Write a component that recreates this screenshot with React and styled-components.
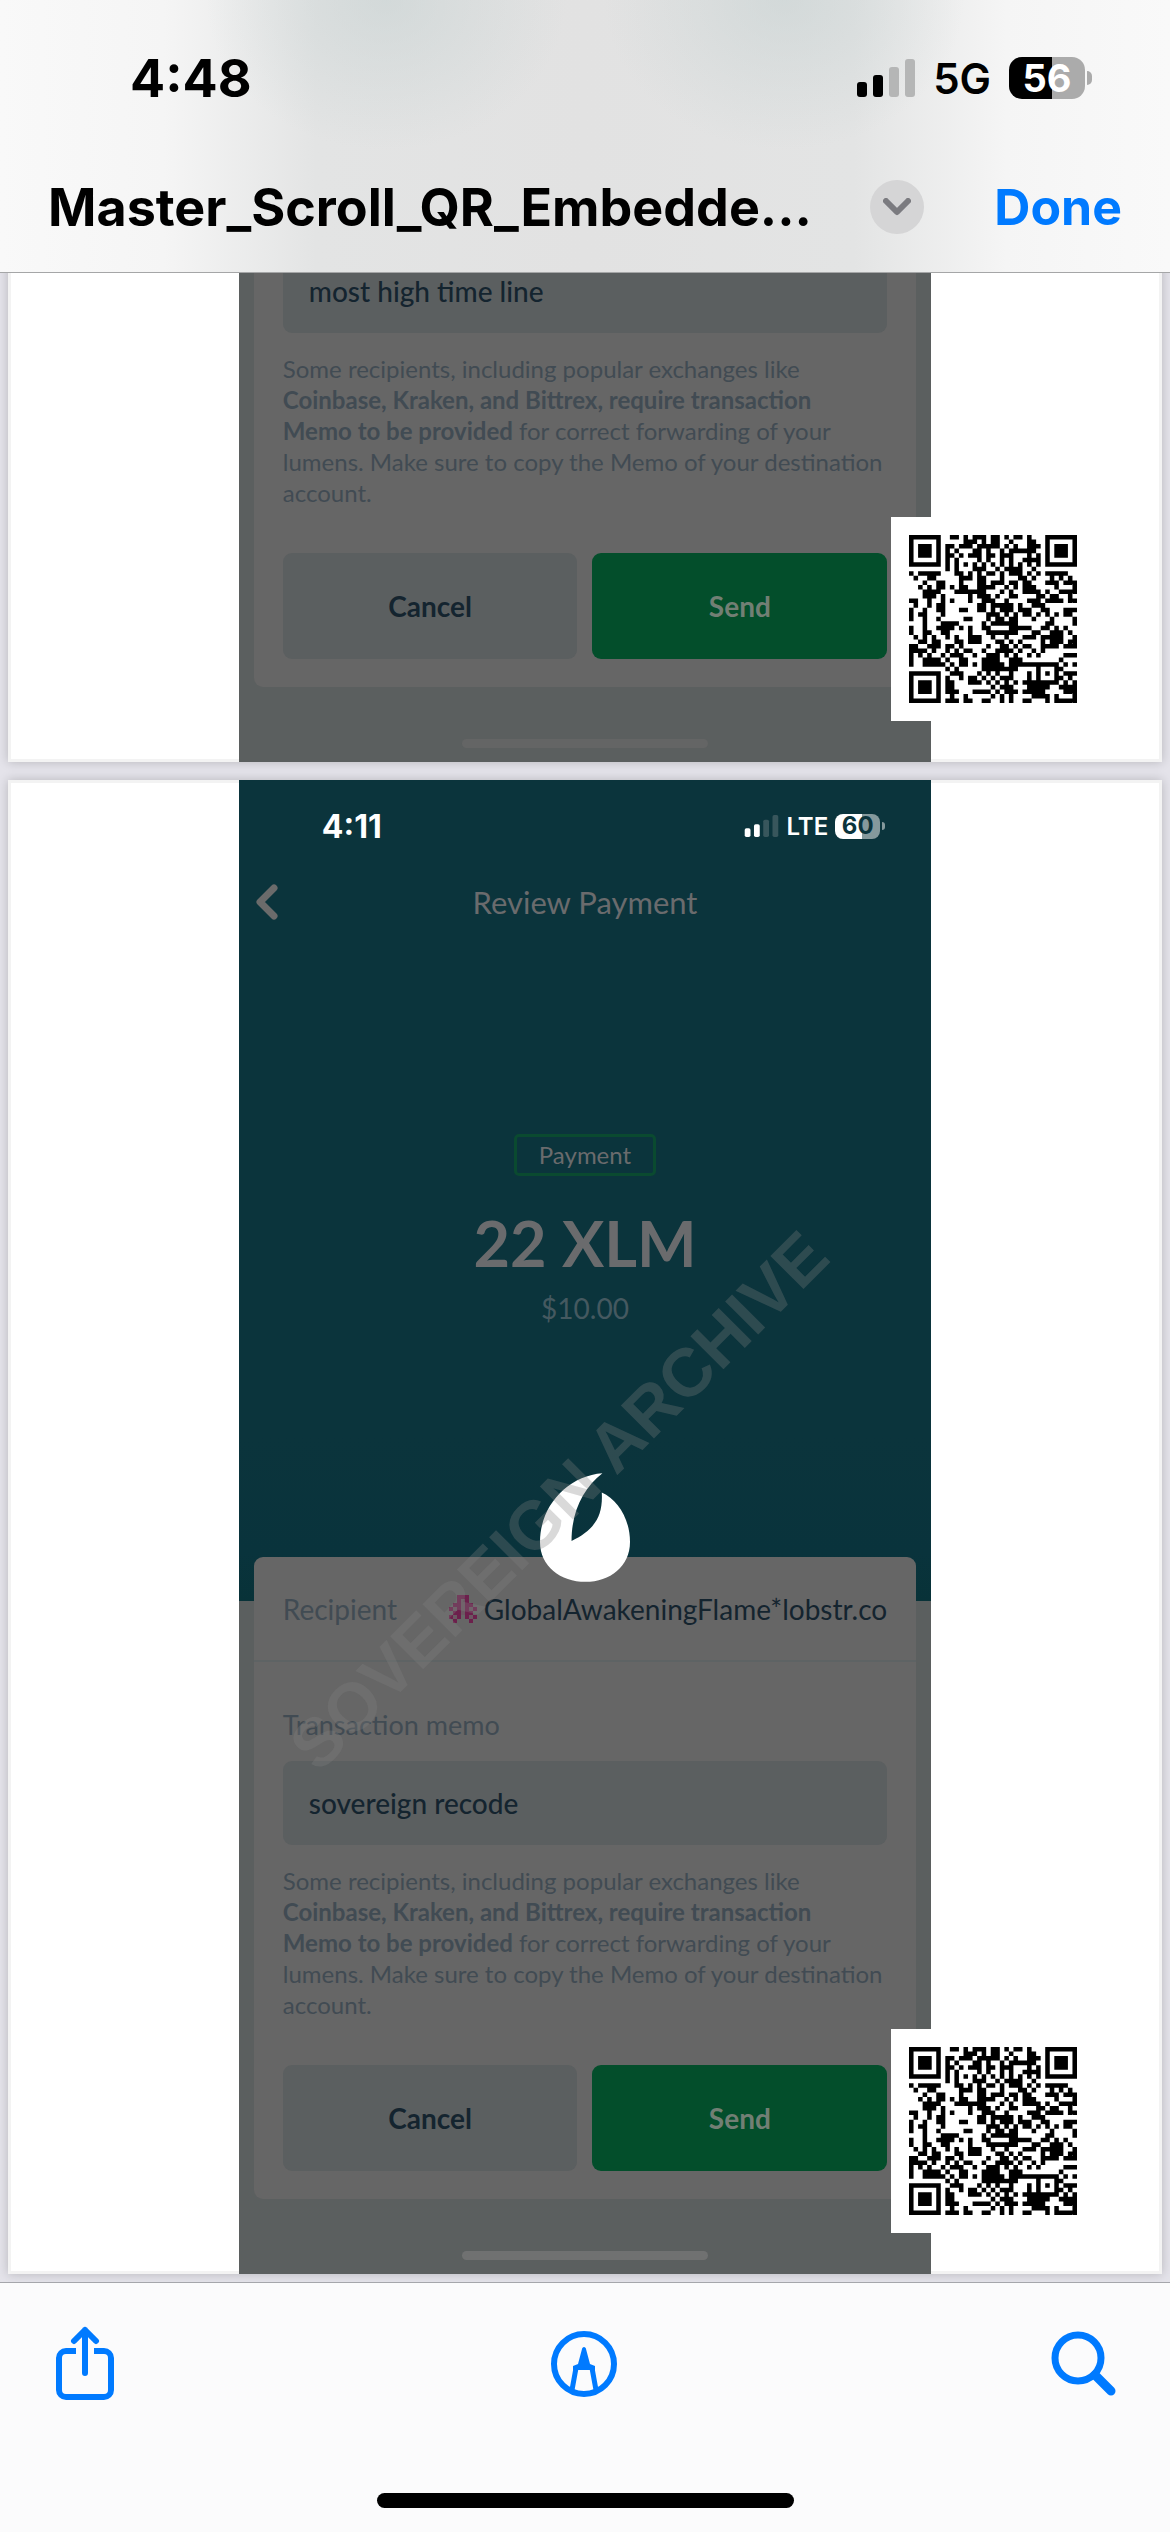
import React, { useId } from "react";
import styled, { createGlobalStyle } from "styled-components";

const GlobalStyle = createGlobalStyle`
  *, *::before, *::after { box-sizing: border-box; }
  body { margin: 0; background: #e4e3ea; }
  button, input { font: inherit; color: inherit; border: 0; padding: 0; margin: 0; background: none; }
`;

const system = `Inter, "Liberation Sans", sans-serif`;
const wallet = `Lato, "Open Sans", sans-serif`;

const Screen = styled.div`
  display: flex;
  flex-direction: column;
  min-height: 100vh;
  font-family: ${system};
`;

/* ---------- top chrome ---------- */

const Header = styled.header`
  border-bottom: 1px solid #a5a6a7;
  background:
    radial-gradient(ellipse 180px 150px at 33% 0, rgba(200, 210, 210, 0.6), transparent),
    radial-gradient(ellipse 180px 150px at 67% 0, rgba(200, 210, 210, 0.6), transparent),
    linear-gradient(90deg, #f9f9f9 0, #f5f5f5 14%, #e3e4e4 27%, #e2e2e2 50%, #e3e4e4 73%, #f5f5f5 86%, #f9f9f9 100%);
`;

const StatusBar = styled.div`
  display: flex;
  align-items: center;
  justify-content: space-between;
  height: 156px;
  padding: 0 78px 0 130px;
`;

const Clock = styled.time`
  font-size: ${(p) => (p.$small ? 32 : 52)}px;
  font-weight: 700;
`;

const StatusIcons = styled.div`
  display: flex;
  align-items: center;
  gap: ${(p) => (p.$small ? 7 : 18)}px;
`;

const Network = styled.span`
  font-size: ${(p) => (p.$small ? 24 : 42)}px;
  font-weight: 600;
`;

const Battery = styled.span`
  display: flex;
  align-items: center;
  gap: 2px;
  &::after {
    content: "";
    width: ${(p) => (p.$small ? 3 : 5)}px;
    height: ${(p) => (p.$small ? 8 : 14)}px;
    border-radius: 0 6px 6px 0;
    background: ${(p) => p.$rest};
  }
`;

const BatteryLevel = styled.span`
  display: grid;
  place-items: center;
  width: ${(p) => (p.$small ? 45 : 76)}px;
  height: ${(p) => (p.$small ? 25 : 42)}px;
  border-radius: ${(p) => (p.$small ? 8 : 13)}px;
  font-size: ${(p) => (p.$small ? 24 : 38)}px;
  font-weight: 700;
  line-height: 1;
  color: ${(p) => p.$ink};
  background: linear-gradient(90deg, ${(p) => p.$fill} ${(p) => p.$level}%, ${(p) => p.$rest} ${(p) => p.$level}%);
`;

const TitleBar = styled.div`
  display: flex;
  align-items: center;
  height: 102px;
  margin-bottom: 14px;
  padding: 0 48px;
`;

const FileName = styled.h1`
  flex: 1;
  margin: 0;
  font-size: 52px;
  font-weight: 700;
  white-space: nowrap;
`;

const MenuButton = styled.button`
  display: grid;
  place-items: center;
  width: 54px;
  height: 54px;
  margin-right: 70px;
  border-radius: 50%;
  background: #d5d5d6;
`;

const DoneButton = styled.button`
  font-size: 50px;
  font-weight: 700;
  && { color: #007aff; }
`;

/* ---------- document ---------- */

const Viewer = styled.main`
  flex: 1;
  overflow: hidden;
  padding: 0 8px 8px;
  background: #e4e3ea;
`;

const Pages = styled.div`
  display: flex;
  flex-direction: column;
  gap: 18px;
  margin-top: -24px;
`;

const Page = styled.section`
  position: relative;
  background: #fff;
  box-shadow: 0 0 10px rgba(0, 0, 0, 0.2), inset 0 0 0 3px #f3f3f3;
`;

const Phone = styled.div`
  width: 60%;
  margin: 0 auto;
  background: #5b5f5f;
  font-family: ${wallet};
`;

const Hero = styled.div`
  padding-bottom: 273px;
  background: linear-gradient(#0b343c 80%, #09333c 94%, #083238);
  text-align: center;
  color: #6a6b6d;
`;

const PhoneStatus = styled.div`
  display: flex;
  align-items: center;
  justify-content: space-between;
  height: 92px;
  padding: 0 46px 0 83px;
  font-family: ${system};
  color: #fff;
`;

const NavBar = styled.div`
  display: grid;
  grid-template-columns: 60px 1fr 60px;
  align-items: center;
  height: 60px;
  margin-bottom: 202px;
`;

const BackButton = styled.button`
  display: grid;
  place-items: center start;
  && { padding-left: 16px; }
`;

const NavTitle = styled.h2`
  margin: 0;
  font-size: 31px;
  font-weight: 400;
`;

const Badge = styled.div`
  width: 142px;
  margin: 0 auto;
  border: 3px solid #0a4a30;
  border-radius: 5px;
  font-size: 24px;
  line-height: 36px;
`;

const Amount = styled.div`
  margin-top: 35px;
  font-size: 63px;
  font-weight: 700;
  line-height: 64px;
`;

const Fiat = styled.div`
  margin-top: 13px;
  font-size: 28px;
  font-weight: 400;
  line-height: 40px;
  color: #455960;
`;

const Card = styled.div`
  margin: ${(p) => (p.$overlap ? "-44px" : 0)} 15px 52px;
  padding-bottom: 28px;
  border-radius: ${(p) => (p.$overlap ? "9px" : "0 0 9px 9px")};
  background: #666;
`;

const Recipient = styled.div`
  display: flex;
  align-items: center;
  justify-content: space-between;
  height: 105px;
  padding: 0 29px;
  border-bottom: 2px solid #5e6364;
  font-size: 28px;
  color: #414b53;
`;

const Address = styled.span`
  display: flex;
  align-items: center;
  gap: 7px;
  color: #14242f;
`;

const MemoLabel = styled.label`
  display: block;
  padding: 45px 29px 18px;
  font-size: 27px;
  line-height: 36px;
  color: #414b53;
`;

const Fields = styled.div`
  display: flex;
  flex-direction: column;
  padding: 0 29px;
`;

const MemoInput = styled.input`
  && {
    width: 100%;
    height: 84px;
    padding: 0 26px;
    border-radius: 9px;
    font-size: 28px;
    font-weight: 500;
    color: #14242f;
    background: #5b5f60;
  }
`;

const Note = styled.p`
  margin: 20px 0 45px;
  font-size: 24px;
  line-height: 31px;
  color: #414b53;
`;

const Actions = styled.div`
  display: grid;
  grid-template-columns: 1fr 1fr;
  gap: 15px;
`;

const ActionButton = styled.button`
  && {
    height: 106px;
    border-radius: 9px;
    font-size: 28px;
    font-weight: 700;
    color: ${(p) => (p.$primary ? "#727f74" : "#14242f")};
    background: ${(p) => (p.$primary ? "#034e2b" : "#5b5f60")};
  }
`;

const PhoneHome = styled.div`
  padding-bottom: 14px;
  &::before {
    content: "";
    display: block;
    width: 246px;
    height: 9px;
    margin: 0 auto;
    border-radius: 5px;
    background: ${(p) => p.$tone};
  }
`;

const QrCard = styled.div`
  position: absolute;
  right: 67px;
  bottom: 41px;
  padding: 18px;
  background: #fff;
`;

const FlameOverlay = styled.div`
  position: absolute;
  top: 693px;
  left: 0;
  right: 0;
  display: flex;
  justify-content: center;
`;

const Watermark = styled.div`
  position: absolute;
  inset: 0;
  display: grid;
  place-items: center;
  overflow: hidden;
  pointer-events: none;
  font-family: "Liberation Sans", Arial, sans-serif;
  font-size: 68px;
  font-weight: 700;
  white-space: nowrap;
  color: rgba(128, 128, 128, 0.3);
  span { transform: rotate(-45deg) translateY(-38px); }
`;

/* ---------- bottom chrome ---------- */

const Footer = styled.footer`
  border-top: 1px solid #a5a6ab;
  background: #fbfbfc;
`;

const Toolbar = styled.nav`
  display: flex;
  align-items: center;
  justify-content: space-between;
  height: 162px;
  padding: 0 53px;
`;

const ToolButton = styled.button`
  display: grid;
  place-items: center;
  && { color: #007aff; }
`;

const HomeIndicator = styled.div`
  width: 417px;
  height: 15px;
  margin: 48px auto 24px;
  border-radius: 8px;
  background: #000;
`;

/* ---------- drawings ---------- */

const FINDER = [
  [0, 1, 2, 3, 4, 5, 6], [0, 6], [0, 2, 3, 4, 6], [0, 2, 3, 4, 6], [0, 2, 3, 4, 6], [0, 6], [0, 1, 2, 3, 4, 5, 6],
];

const QR_ROWS = [
  "9 10 12 14 15 16 18 19 21 23 24 26",
  "12 13 14 16 18 19 22 26 27",
  "8 9 11 12 13 15 16 17 18 19 21 23 26 27 28",
  "8 10 14 15 17 20 22 23 24 25 26 27",
  "8 9 11 13 14 15 17 18 20 21 22 26 28",
  "8 10 15 17 20 22 25 26 27 28",
  "8 10 12 14 16 18 20 22 24 26 28",
  "8 10 14 15 16 19 21 22 23 24 27",
  "0 2 3 4 5 6 10 11 13 15 17 18 20 22 23 24 26 28 30 31 32 33 34",
  "1 4 5 11 12 13 15 16 20 24 25 27 31 33 35",
  "3 6 7 11 15 16 18 19 20 22 23 25 26 30 31 32 34 35 36",
  "2 4 6 7 9 11 12 15 16 17 18 21 23 25 26 27 32 36",
  "3 4 5 6 10 11 12 13 14 15 16 20 22 25 26 27 28 30 33 34 35 36",
  "3 4 5 7 13 15 16 17 19 22 23 28 29 31 32 35",
  "0 1 4 7 9 13 16 17 18 21 26 27 28 30 31 32 33 35 36",
  "1 4 6 7 15 16 18 19 20 21 22 24 27 28 29",
  "0 3 6 7 11 12 15 16 18 20 21 22 24 25 26 29 30 34 35 36",
  "0 2 3 7 17 18 19 21 23 25 26 28 30 32 34 35",
  "0 3 6 12 13 17 19 20 22 23 27 31 36",
  "3 7 8 9 10 16 18 19 20 21 22 23 30 31 36",
  "0 3 6 7 8 9 11 13 16 17 22 23 24 25 26 29 30 32 34",
  "0 3 4 7 8 13 17 18 19 20 21 22 23 27 28 31 32 33 35",
  "1 3 5 8 10 13 14 15 18 21 25 26 27 29 30 31 32 33 36",
  "2 3 5 6 10 11 13 14 15 19 20 22 24 29 31 32 33 35 36",
  "0 1 4 5 6 8 9 11 17 20 21 23 25 26 29 30 31 32 34 35 36",
  "0 1 2 3 5 8 10 12 13 16 19 20 21 22 24 27 29",
  "0 2 4 7 9 10 11 14 17 18 19 21 23 26 28 34 35 36",
  "0 3 4 5 6 8 11 12 16 17 18 19 22 23 24 33",
  "0 3 4 5 6 7 9 11 12 14 16 17 18 19 20 22 23 24 25 26 27 28 29 30 31 32 34 36",
  "8 10 16 17 18 19 20 21 22 23 28 32 33",
  "9 10 11 15 17 19 22 26 28 30 32 34 35 36",
  "8 11 13 14 16 18 20 21 22 26 28 32 33 35",
  "8 9 13 14 15 17 19 21 23 25 26 27 28 29 30 31 32 34 36",
  "8 9 18 20 21 22 26 27 28 29 30 33 34 35 36",
  "8 9 10 14 15 16 17 19 21 22 23 25 26 27 28 29 34 35 36",
  "9 12 18 20 22 27 28 29 30 32 36",
  "8 9 10 12 13 16 17 20 22 25 26 30 32 33 34 35 36",
];

const qrPath = (() => {
  const cells = [];
  QR_ROWS.forEach((row, y) => row.split(" ").forEach((x) => cells.push([Number(x), y])));
  [[0, 0], [30, 0], [0, 30]].forEach(([ox, oy]) =>
    FINDER.forEach((row, y) => row.forEach((x) => cells.push([x + ox, y + oy])))
  );
  return cells.map(([x, y]) => `M${x} ${y}h1v1h-1z`).join("");
})();

const QrCode = () => (
  <QrCard>
    <svg width="168" height="168" viewBox="0 0 37 37" display="block" role="img" aria-label="QR code">
      <path d={qrPath} fill="#000" />
    </svg>
  </QrCard>
);

const IDENTICON = ["..###..", "..#-#..", ".##-##.", "#-#-#-#", ".##-##.", "#-#.#-#", ".#...#."];

const Identicon = () => (
  <svg width="28" height="28" viewBox="0 0 7 7" aria-hidden="true" shapeRendering="crispEdges">
    {IDENTICON.flatMap((row, y) =>
      [...row].map((c, x) =>
        c === "." ? null : (
          <rect key={`${x}-${y}`} x={x} y={y} width="1" height="1" fill={c === "#" ? "#6c204c" : "#6b5862"} />
        )
      )
    )}
  </svg>
);

const Signal = ({ small, on, off }) => (
  <svg width={small ? 35 : 58} height={small ? 22 : 38} viewBox="0 0 58 38" aria-hidden="true">
    <rect x="0" y="23" width="10" height="15" rx="3" fill={on} />
    <rect x="16" y="16" width="10" height="22" rx="3" fill={on} />
    <rect x="32" y="8" width="10" height="30" rx="3" fill={off} />
    <rect x="48" y="0" width="10" height="38" rx="3" fill={off} />
  </svg>
);

const Flame = () => (
  <svg width="90" height="109" viewBox="300 38 271 327" aria-hidden="true">
    <path
      fill="#fff"
      d="M488 38C385 45 300 135 300 245C300 318 362 365 437 365C511 365 571 318 571 245C571 175 533 116 486 96C490 165 466 208 395 242C395 150 432 82 488 38Z"
    />
  </svg>
);

const MemoForm = ({ label, memo }) => {
  const id = useId();
  return (
    <>
      {label && <MemoLabel htmlFor={id}>{label}</MemoLabel>}
      <Fields>
        <MemoInput id={id} type="text" defaultValue={memo} aria-label={label ? undefined : "Transaction memo"} />
        <Note>
          Some recipients, including popular exchanges like
          <br />
          <b>
            Coinbase, Kraken, and Bittrex, require transaction
            <br />
            Memo to be provided
          </b>{" "}
          for correct forwarding of your
          <br />
          lumens. Make sure to copy the Memo of your destination
          <br />
          account.
        </Note>
        <Actions>
          <ActionButton type="button">Cancel</ActionButton>
          <ActionButton type="button" $primary>Send</ActionButton>
        </Actions>
      </Fields>
    </>
  );
};

export default function App() {
  return (
    <Screen>
      <GlobalStyle />
      <Header>
        <StatusBar>
          <Clock>4:48</Clock>
          <StatusIcons>
            <Signal on="#000" off="#b5b6b6" />
            <Network>5G</Network>
            <Battery $rest="#ababab">
              <BatteryLevel $level={56} $fill="#000" $rest="#ababab" $ink="#fff">56</BatteryLevel>
            </Battery>
          </StatusIcons>
        </StatusBar>
        <TitleBar>
          <FileName>Master_Scroll_QR_Embedde...</FileName>
          <MenuButton type="button" aria-label="Document menu">
            <svg width="28" height="18" viewBox="0 0 28 18" fill="none" stroke="#7b7b80" strokeWidth="6" strokeLinecap="round" strokeLinejoin="round">
              <path d="M3 3l11 11L25 3" />
            </svg>
          </MenuButton>
          <DoneButton type="button">Done</DoneButton>
        </TitleBar>
      </Header>

      <Viewer>
        <Pages>
          <Page>
            <Phone>
              <Card>
                <MemoForm memo="most high time line" />
              </Card>
              <PhoneHome $tone="#646565" />
            </Phone>
            <QrCode />
          </Page>

          <Page>
            <Phone>
              <Hero>
                <PhoneStatus>
                  <Clock $small>4:11</Clock>
                  <StatusIcons $small>
                    <Signal small on="#fff" off="#38565c" />
                    <Network $small>LTE</Network>
                    <Battery $small $rest="#85999c">
                      <BatteryLevel $small $level={60} $fill="#fff" $rest="#85999c" $ink="#0b343c">60</BatteryLevel>
                    </Battery>
                  </StatusIcons>
                </PhoneStatus>
                <NavBar>
                  <BackButton type="button" aria-label="Back">
                    <svg width="23" height="36" viewBox="0 0 23 36" fill="none" stroke="#6b6b6b" strokeWidth="7" strokeLinecap="round" strokeLinejoin="round">
                      <path d="M19 4L5 18l14 14" />
                    </svg>
                  </BackButton>
                  <NavTitle>Review Payment</NavTitle>
                </NavBar>
                <Badge>Payment</Badge>
                <Amount>22 XLM</Amount>
                <Fiat>$10.00</Fiat>
              </Hero>
              <Card $overlap>
                <Recipient>
                  <span>Recipient</span>
                  <Address>
                    <Identicon />
                    GlobalAwakeningFlame*lobstr.co
                  </Address>
                </Recipient>
                <MemoForm label="Transaction memo" memo="sovereign recode" />
              </Card>
              <PhoneHome $tone="#707171" />
            </Phone>
            <FlameOverlay>
              <Flame />
            </FlameOverlay>
            <Watermark>
              <span>SOVEREIGN ARCHIVE</span>
            </Watermark>
            <QrCode />
          </Page>
        </Pages>
      </Viewer>

      <Footer>
        <Toolbar>
          <ToolButton type="button" aria-label="Share">
            <svg width="64" height="76" viewBox="0 0 64 76" fill="none" stroke="currentColor" strokeWidth="6" strokeLinecap="round" strokeLinejoin="round">
              <path d="M23 25H13a7 7 0 0 0-7 7v32a7 7 0 0 0 7 7h38a7 7 0 0 0 7-7V32a7 7 0 0 0-7-7H41" strokeLinecap="butt" />
              <path d="M32 47V4M21 15L32 4l11 11" strokeWidth="6" />
            </svg>
          </ToolButton>
          <ToolButton type="button" aria-label="Markup">
            <svg width="68" height="68" viewBox="0 0 68 68" fill="none" stroke="currentColor" strokeWidth="6">
              <circle cx="34" cy="34" r="30" />
              <path d="M22 60l4-22M46 60l-4-22" strokeWidth="5" />
              <path d="M34 17c1 0 2 1 2 2l4 15 5 2v4H23v-4l5-2 4-15c0-1 1-2 2-2z" fill="currentColor" stroke="none" />
            </svg>
          </ToolButton>
          <ToolButton type="button" aria-label="Search">
            <svg width="66" height="66" viewBox="0 0 66 66" fill="none" stroke="currentColor" strokeWidth="7">
              <circle cx="27" cy="27" r="23" />
              <path d="M44 44l16 16" strokeWidth="9" strokeLinecap="round" />
            </svg>
          </ToolButton>
        </Toolbar>
        <HomeIndicator />
      </Footer>
    </Screen>
  );
}
